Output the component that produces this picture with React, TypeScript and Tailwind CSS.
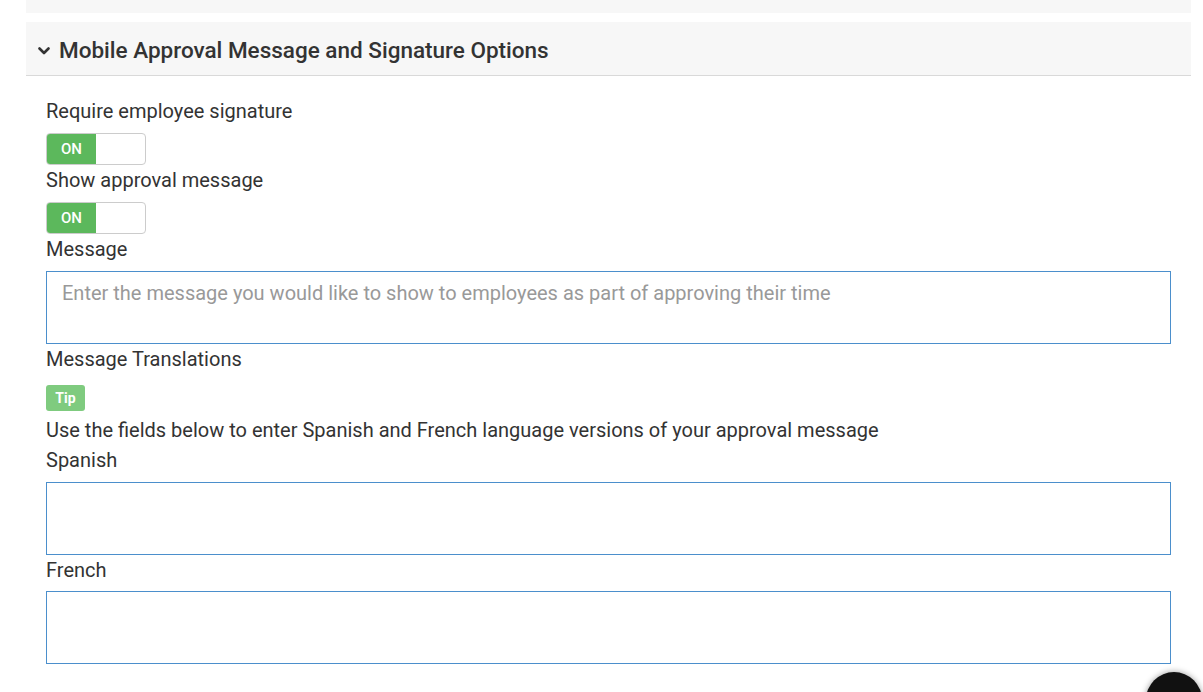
const Toggle = () => (
  <div className="flex h-[32px] w-[100px] overflow-hidden rounded-[4px] border border-[#ccc] bg-white">
    <div className="flex w-[49px] items-center justify-center bg-[#5cb85c] text-[15px] font-medium text-white">
      ON
    </div>
  </div>
);

const Label = ({ children }: { children: React.ReactNode }) => (
  <div className="h-[30px] leading-[30px] text-[20px] text-[#333]">{children}</div>
);

const Box = ({ placeholder }: { placeholder?: string }) => (
  <textarea
    placeholder={placeholder}
    className="block h-[73px] w-[1125px] resize-none border border-[#4b8fcc] px-[15px] py-[6px] text-[20px] text-[#333] outline-none placeholder:text-[#999]"
  />
);

export default function App() {
  return (
    <div className="relative min-h-[692px] overflow-hidden bg-white font-['Roboto',sans-serif] text-[#333]">
      <div className="ml-[26px] mr-[12px] h-[13px] bg-[#f7f7f7]" />
      <div className="ml-[26px] mr-[12px] mt-[9px] flex h-[54px] items-center border-b border-[#d9d9d9] bg-[#f7f7f7] pl-[12px] pt-[4px]">
        <svg viewBox="0 0 12 8" className="mr-[9px] h-[8px] w-[12px]" fill="none">
          <path d="M1.5 1.5 L6 6 L10.5 1.5" stroke="#333" strokeWidth="2.6" strokeLinecap="round" strokeLinejoin="round" />
        </svg>
        <span className="text-[22.5px] font-medium">Mobile Approval Message and Signature Options</span>
      </div>
      <div className="ml-[46px] mt-[20px]">
        <div className="mb-[7px]"><Label>Require employee signature</Label></div>
        <Toggle />
        <div className="mb-[7px]"><Label>Show approval message</Label></div>
        <Toggle />
        <div className="mb-[7px]"><Label>Message</Label></div>
        <Box placeholder="Enter the message you would like to show to employees as part of approving their time" />
        <Label>Message Translations</Label>
        <div className="pb-[4px] pt-[11px]">
          <span className="inline-flex h-[26px] w-[39px] items-center justify-center rounded-[3px] bg-[#7fcb7f] text-[14px] font-bold text-white">
            Tip
          </span>
        </div>
        <Label>Use the fields below to enter Spanish and French language versions of your approval message</Label>
        <div className="mb-[7px]"><Label>Spanish</Label></div>
        <Box />
        <div className="mb-[6px]"><Label>French</Label></div>
        <Box />
      </div>
      <div className="absolute bottom-[-36px] right-[1px] h-[56px] w-[56px] rounded-full bg-[#111] shadow-[0_0_6px_rgba(0,0,0,0.4)]" />
    </div>
  );
}
